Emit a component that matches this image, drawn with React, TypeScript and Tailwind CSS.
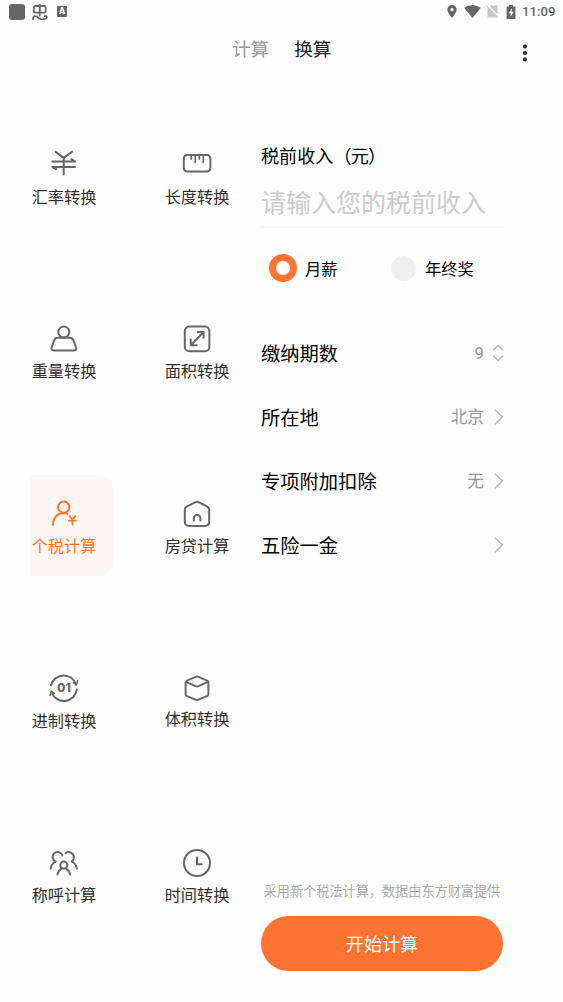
import { useState } from 'react'
import type { ReactNode } from 'react'

type Tool = {
  id: string
  label: string
  icon: ReactNode
  raised?: boolean
}

const tools: Tool[] = [
  {
    id: 'rate',
    label: '汇率转换',
    icon: <path d="M7.7 3.9 15.7 9.9 24 3.9M15.7 9.9V26.6M4.3 13.6H27L23.4 11.2M27 18.9H4.3L8 21.2" />,
  },
  {
    id: 'length',
    label: '长度转换',
    icon: (
      <>
        <rect x="2.8" y="6.9" width="26.6" height="16.6" rx="3.4" />
        <path d="M10.3 7V11M14.3 7V14.3M18.3 7V11M22.3 7V14.3" strokeWidth="1.7" />
      </>
    ),
  },
  {
    id: 'weight',
    label: '重量转换',
    icon: (
      <>
        <circle cx="15.8" cy="9" r="5.5" />
        <path d="M9.8 14.8H21.8Q24.5 14.8 25.4 17.3L28 24Q29 27.6 25.6 27.6H6.2Q2.7 27.6 3.7 24L6.2 17.3Q7.1 14.8 9.8 14.8Z" />
      </>
    ),
  },
  {
    id: 'area',
    label: '面积转换',
    icon: (
      <>
        <rect x="3.8" y="3.6" width="24.6" height="24.6" rx="4.5" />
        <path d="M9.8 22.2 22.6 9M16.8 9H22.6V14.8M9.8 16.4V22.2H15.6" />
      </>
    ),
  },
  {
    id: 'tax',
    label: '个税计算',
    icon: (
      <>
        <circle cx="15.7" cy="9.2" r="5.6" />
        <path d="M5 26.8C5 20.2 9.5 15 15.2 15Q17.6 15 19.4 16" />
        <path d="M21.4 18.2 24.4 21.4 27.4 18.2M20.8 22.6H28M24.4 21.6V26.6" strokeWidth="1.7" />
      </>
    ),
  },
  {
    id: 'mortgage',
    label: '房贷计算',
    icon: (
      <>
        <path d="M14 4.3Q16 3.2 18 4.3L26.3 8.6Q28.2 9.6 28.2 11.8V23.6Q28.2 28 23.8 28H8.2Q3.8 28 3.8 23.6V11.8Q3.8 9.6 5.7 8.6Z" />
        <path d="M12.8 22.4V20.2A3.3 3.3 0 0 1 19.4 20.2V22.4" />
      </>
    ),
  },
  {
    id: 'binary',
    label: '进制转换',
    icon: (
      <>
        <path d="M3 13.4A13 13 0 0 1 28 12.4M3.6 20.2A13 13 0 0 0 28.8 17.6" />
        <path d="M25.4 10.6 28.4 12.8 29.6 8.6M2 23.6 3.4 19.2 6.4 21.6" strokeWidth="1.6" />
        <text
          x="16"
          y="20.2"
          textAnchor="middle"
          fill="currentColor"
          stroke="none"
          className="font-['Inter',sans-serif] text-[12.2px] font-extrabold"
        >
          01
        </text>
      </>
    ),
  },
  {
    id: 'volume',
    label: '体积转换',
    raised: true,
    icon: (
      <>
        <path d="M14.5 4.9Q16 4.2 17.5 4.9L26 8.6Q27.4 9.3 27.4 10.8V22Q27.4 23.5 26 24.2L17.5 27.7Q16 28.4 14.5 27.7L6 24.2Q4.6 23.5 4.6 22V10.8Q4.6 9.3 6 8.6Z" />
        <path d="M5 9.8 14.5 14.1Q16 14.8 17.5 14.1L27 9.8" />
      </>
    ),
  },
  {
    id: 'kinship',
    label: '称呼计算',
    icon: (
      <>
        <path d="M14.4 8.6A5 5 0 1 0 7.8 14.6C4.8 16 3 18.6 2.7 21.6" />
        <path d="M17.4 6.2A5 5 0 1 1 23.8 14.6C26.8 16 28.6 18.6 28.9 21.6" />
        <circle cx="15.8" cy="18.1" r="3.5" />
        <path d="M9.6 27.4Q10.2 23.6 13.4 21.6M18.2 21.6Q21.4 23.6 22 27.4" />
      </>
    ),
  },
  {
    id: 'time',
    label: '时间转换',
    icon: (
      <>
        <circle cx="16" cy="16" r="13" />
        <path d="M16 10.5V17.3H20.8" />
      </>
    ),
  },
]

function StatusBar() {
  return (
    <div className="flex h-[23px] items-center justify-between pl-[9px] pr-2 text-[#666]">
      <div className="flex items-center">
        <span className="h-4 w-4 rounded-[3px] bg-[#666]" />
        <svg viewBox="0 0 16 16" className="ml-[7px] h-4 w-4" fill="none" stroke="currentColor" strokeWidth="1.8" strokeLinecap="round">
          <rect x="1.8" y="2" width="11.8" height="6.6" rx="1.4" />
          <path d="M7.8.4V11.6M1 15.2C.8 12 3.8 11 6 13.4C8.4 16 11 15.6 13.6 14.8C15.4 14 15.2 11.4 12.8 12.2" />
        </svg>
        <span className="ml-[9px] flex h-[11px] w-[10px] items-center justify-center rounded-[1px] bg-[#666] font-['Roboto',sans-serif] text-[9px] font-black leading-none text-white">
          A
        </span>
      </div>
      <div className="flex items-center">
        <svg viewBox="0 0 10 13" className="h-[13px] w-[10px]" fill="currentColor">
          <path fillRule="evenodd" d="M5 0A4.6 4.6 0 0 0 .4 4.6C.4 8 5 13 5 13S9.6 8 9.6 4.6A4.6 4.6 0 0 0 5 0ZM5 3A1.6 1.6 0 1 1 5 6.2A1.6 1.6 0 0 1 5 3Z" />
        </svg>
        <svg viewBox="0 0 17 13" className="ml-[7px] h-[13px] w-[17px]" fill="currentColor">
          <path d="M8.5 13 .2 2.8Q8.5-2.6 16.8 2.8Z" />
        </svg>
        <svg viewBox="0 0 13 13" className="ml-[5px] h-[13px] w-[13px]">
          <path d="M4.5.4H11.6V12.6H1.6V3.4Z" fill="#c8c8c8" />
          <path d="M1.2 0 13 12" stroke="#fff" strokeWidth="1.4" />
          <path d="M.4.6 12.4 12.8" stroke="#c8c8c8" strokeWidth="1.1" />
        </svg>
        <svg viewBox="0 0 10 14" className="ml-[7px] h-[14px] w-[10px]">
          <path d="M3 0H7V1.4H9.4V14H.6V1.4H3Z" fill="currentColor" />
          <path d="M6 3.2 2.6 8.2H4.6V11.8L7.6 6.8H5.6Z" fill="#fff" />
        </svg>
        <span className="ml-[6px] w-[33px] whitespace-nowrap font-['Roboto',sans-serif] text-[13.2px] font-medium leading-none">11:09</span>
      </div>
    </div>
  )
}

function ToolButton({ tool, active, onClick }: { tool: Tool; active: boolean; onClick: () => void }) {
  return (
    <button
      type="button"
      onClick={onClick}
      className={`flex h-[101px] w-[83px] flex-col items-center rounded-r-[14px] pr-[15px] pt-[23px] ${
        active ? 'bg-[#fff7f4] text-[#ff7433]' : 'text-[#303030]'
      }`}
    >
      <svg
        viewBox="0 0 32 32"
        className={`h-8 w-8 shrink-0 ${active ? 'text-[#ff7433]' : 'text-[#666]'}`}
        fill="none"
        stroke="currentColor"
        strokeWidth="2"
        strokeLinecap="round"
        strokeLinejoin="round"
      >
        {tool.icon}
      </svg>
      <span className={`whitespace-nowrap text-[16.2px] leading-6 ${tool.raised ? 'mt-[1.6px]' : 'mt-[3.4px]'}`}>{tool.label}</span>
    </button>
  )
}

function Row({ label, value, stepper }: { label: string; value?: string; stepper?: boolean }) {
  return (
    <div className="flex h-16 items-center justify-between">
      <span className="text-[19.3px] text-black">{label}</span>
      <div className="flex items-center text-[#999]">
        <span className={stepper ? "pt-[2px] font-['Roboto',sans-serif] text-[16.7px]" : 'text-[16.7px]'}>{value}</span>
        <svg viewBox="0 0 14 20" className="ml-[7px] h-5 w-[14px]" fill="none" stroke="#b8b8b8" strokeWidth="1.4">
          {stepper ? <path d="M2.2 7.2 7.2 2.4 12.2 7.2M2.2 12.8 7.2 17.6 12.2 12.8" /> : <path d="M4 2.8 11.6 10 4 17.2" />}
        </svg>
      </div>
    </div>
  )
}

export default function App() {
  const [selected, setSelected] = useState('tax')
  const [mode, setMode] = useState<'month' | 'year'>('month')

  return (
    <div lang="zh-CN" className="h-[1002px] w-[563px] overflow-hidden bg-[#fefefe] font-['Noto_Sans_CJK_SC',sans-serif]">
      <StatusBar />

      <header className="flex h-[52px] items-center justify-between pl-[232px] pr-[34px]">
        <nav className="-mt-[2px] flex gap-[25px] text-[18.6px] leading-7">
          <span className="text-[#999]">计算</span>
          <span className="text-[#222]">换算</span>
        </nav>
        <svg viewBox="0 0 8 20" className="mt-[7px] h-5 w-2" fill="#303030">
          <circle cx="4" cy="3.6" r="2.1" />
          <circle cx="4" cy="10" r="2.1" />
          <circle cx="4" cy="16.4" r="2.1" />
        </svg>
      </header>

      <div className="flex">
        <section className="grid w-[231px] shrink-0 grid-cols-[83px_83px] content-start gap-x-[50px] gap-y-[73.7px] pl-[30px] pt-[50.2px]">
          {tools.map((t) => (
            <ToolButton key={t.id} tool={t} active={selected === t.id} onClick={() => setSelected(t.id)} />
          ))}
        </section>

        <section className="ml-[30px] flex h-[927px] w-[242px] flex-col pt-[66px]">
          <label className="whitespace-nowrap text-[18.1px] leading-7 text-black">
            税前收入<span className="tracking-[-0.8px]">（元）</span>
          </label>
          <input
            placeholder="请输入您的税前收入"
            className="mt-2 h-[51px] w-full border-b-2 border-[#f7f7f7] pb-[2px] text-[25px] outline-none placeholder:text-[#ccc]"
          />

          <div className="mt-5 flex h-10 items-center pl-2 text-[16.3px] text-black">
            <button type="button" onClick={() => setMode('month')} className="flex w-[121px] items-center gap-2">
              <span
                className={
                  mode === 'month'
                    ? 'h-7 w-7 rounded-full border-[7px] border-[#ff7433]'
                    : 'ml-[1px] h-[25px] w-[25px] rounded-full bg-[#efefef]'
                }
              />
              月薪
            </button>
            <button type="button" onClick={() => setMode('year')} className="flex items-center gap-[9px] whitespace-nowrap">
              <span
                className={
                  mode === 'year'
                    ? 'h-7 w-7 rounded-full border-[7px] border-[#ff7433]'
                    : 'ml-[1px] h-[25px] w-[25px] rounded-full bg-[#efefef]'
                }
              />
              年终奖
            </button>
          </div>

          <div className="-mr-[2px] mt-[33px]">
            <Row label="缴纳期数" value="9" stepper />
            <Row label="所在地" value="北京" />
            <Row label="专项附加扣除" value="无" />
            <Row label="五险一金" />
          </div>

          <p className="mt-auto whitespace-nowrap text-center text-[13.15px] leading-5 text-[#aaa]">采用新个税法计算，数据由东方财富提供</p>
          <button type="button" className="mb-[31px] mt-[15px] h-[55px] shrink-0 rounded-full bg-[#ff7433] text-[18.1px] text-white">
            开始计算
          </button>
        </section>
      </div>
    </div>
  )
}
